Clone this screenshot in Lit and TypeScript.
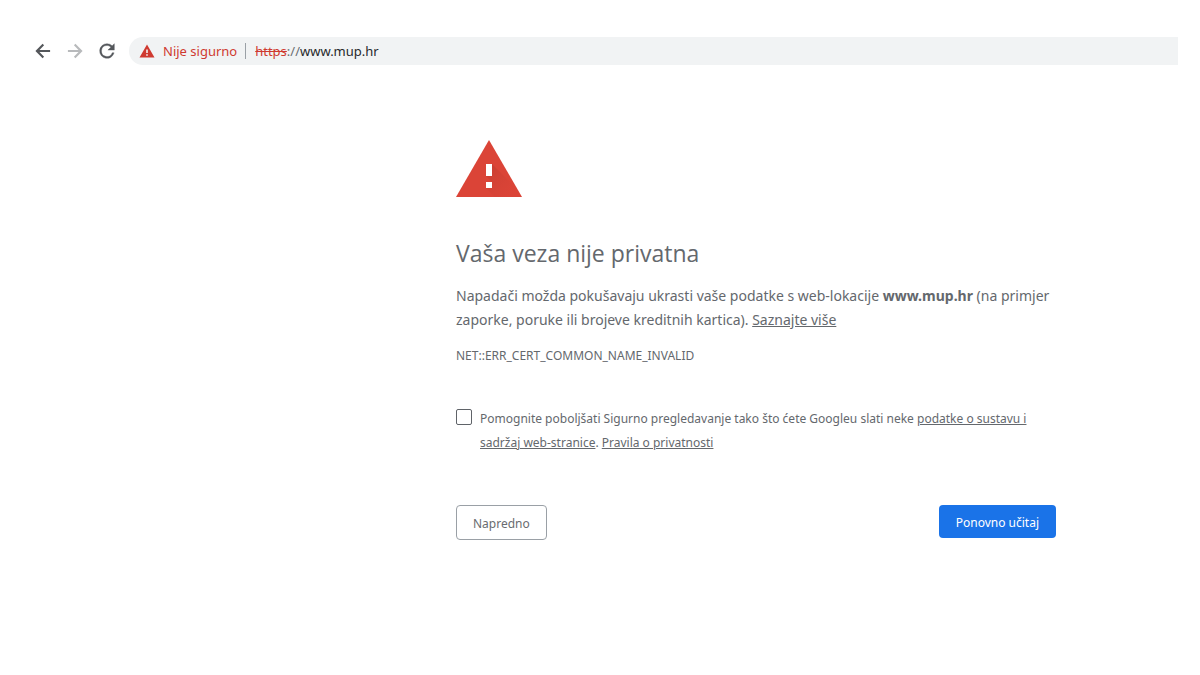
import { LitElement, html, css } from "lit";
import { customElement, state } from "lit/decorators.js";

@customElement("browser-toolbar")
class BrowserToolbar extends LitElement {
  static styles = css`
    :host {
      display: flex;
      align-items: center;
      padding: 37px 22px 0 31px;
      font-family: "Noto Sans", "Open Sans", sans-serif;
      font-size: 13px;
      line-height: 20px;
    }
    button {
      border: 0;
      background: none;
      font: inherit;
      color: inherit;
      padding: 0;
    }
    .nav {
      display: flex;
      gap: 8px;
      margin-right: 10px;
      color: #54575b;
    }
    .nav button {
      display: grid;
      place-items: center;
      width: 24px;
      height: 28px;
    }
    .nav button:disabled {
      color: #b8babc;
    }
    svg {
      display: block;
      fill: currentColor;
    }
    .omnibox {
      display: flex;
      align-items: center;
      flex: 1;
      min-width: 0;
      height: 28px;
      padding-left: 10px;
      border-radius: 14px 0 0 14px;
      background: #f1f3f4;
    }
    .security {
      display: flex;
      align-items: center;
      gap: 8px;
      color: #cf3a30;
      white-space: nowrap;
    }
    .divider {
      width: 1px;
      height: 16px;
      margin: 0 9px 0 8px;
      background: #9aa0a6;
    }
    .scheme {
      color: #cf3a30;
      text-decoration: line-through;
    }
    .slashes {
      color: #6b6f73;
    }
    input {
      flex: 1;
      min-width: 0;
      border: 0;
      padding: 0;
      outline: 0;
      background: none;
      font: inherit;
      color: #27292c;
    }
  `;

  render() {
    return html`
      <nav class="nav" aria-label="Navigacija">
        <button aria-label="Natrag">
          <svg width="20" height="20" viewBox="0 0 24 24">
            <path d="M20.5 10.7H7.800l5.500-5.500L11.500 3.400 2.900 12l8.600 8.600 1.800-1.800-5.500-5.500h12.700z" />
          </svg>
        </button>
        <button aria-label="Naprijed" disabled>
          <svg width="20" height="20" viewBox="0 0 24 24">
            <path d="M3.500 10.700h12.700l-5.500-5.500 1.800-1.800 8.600 8.600-8.600 8.600-1.800-1.800 5.500-5.500H3.500z" />
          </svg>
        </button>
        <button aria-label="Osvježi">
          <svg width="22" height="22" viewBox="0 0 24 24">
            <path
              stroke="currentColor"
              stroke-width=".4"
              d="M17.650 6.350A7.950 7.950 0 0 0 12 4a8 8 0 1 0 7.730 10h-2.080A6 6 0 1 1 12 6c1.660 0 3.140.690 4.220 1.780L13 11h7V4z"
            />
          </svg>
        </button>
      </nav>
      <div class="omnibox">
        <button class="security">
          <svg width="16" height="14" viewBox="0 0 16 14">
            <path
              fill-rule="evenodd"
              d="M8 .5 15.500 13.500H.5zM7.200 5.500v3.500h1.600V5.500zm0 4.700v1.600h1.600v-1.600z"
            />
          </svg>
          Nije sigurno
        </button>
        <span class="divider"></span>
        <span class="scheme">https</span><span class="slashes">://</span>
        <input aria-label="Adresa" value="www.mup.hr" spellcheck="false" />
      </div>
    `;
  }
}

@customElement("privacy-warning")
class PrivacyWarning extends LitElement {
  static styles = css`
    :host {
      display: block;
      box-sizing: border-box;
      max-width: 600px;
      margin: 75px 24px 0 38%;
      color: #64686d;
      font-family: "Noto Sans", "Open Sans", sans-serif;
      font-size: 14px;
      line-height: 24px;
    }
    .icon {
      display: block;
    }
    h1 {
      margin: 40px 0 15px;
      font-family: "Open Sans", "Noto Sans", sans-serif;
      font-size: 23px;
      font-weight: 400;
      line-height: 32px;
    }
    p {
      margin: 0;
    }
    a {
      color: inherit;
      text-decoration: underline;
    }
    .code {
      margin-top: 12px;
      font-size: 12px;
    }
    .opt-in {
      display: flex;
      gap: 8px;
      margin-top: 39px;
      font-size: 12px;
    }
    input {
      appearance: none;
      flex: none;
      width: 16px;
      height: 16px;
      margin: 2px 0 0;
      border: 1px solid #5f6368;
      border-radius: 2px;
      background: #fff;
    }
    input:checked {
      background: #1a73e8;
    }
    .actions {
      display: flex;
      justify-content: space-between;
      align-items: flex-start;
      margin-top: 50px;
    }
    button {
      padding: 9px 17px 7px;
      border: 0;
      border-radius: 4px;
      font: inherit;
      font-size: 12px;
      line-height: 17px;
    }
    .secondary {
      padding: 9px 16px 7px;
      border: 1px solid #9aa0a6;
      background: #fff;
      color: #696c70;
    }
    .primary {
      background: #1a73e8;
      color: #fff;
    }
  `;

  @state() private report = false;

  render() {
    return html`
      <svg class="icon" width="66" height="57" viewBox="0 0 66 57" aria-hidden="true">
        <defs>
          <linearGradient id="shade" x1="0" y1="0" x2="1" y2="1">
            <stop offset="0" stop-color="#b8382c" stop-opacity=".6" />
            <stop offset="1" stop-color="#db4437" stop-opacity="0" />
          </linearGradient>
        </defs>
        <path fill="#db4437" d="M33 0 66 57H0z" />
        <path fill="url(#shade)" d="M36 24 56 44 62 57H39l-9-9 6-6-6-6z" />
        <path fill="#fff" d="M30 24h6v12h-6zM30 42h6v6h-6z" />
      </svg>
      <h1>Vaša veza nije privatna</h1>
      <p>
        Napadači možda pokušavaju ukrasti vaše podatke s web-lokacije
        <strong>www.mup.hr</strong> (na primjer zaporke, poruke ili brojeve kreditnih kartica).
        <a href="#saznajte">Saznajte više</a>
      </p>
      <p class="code">NET::ERR_CERT_COMMON_NAME_INVALID</p>
      <div class="opt-in">
        <input
          id="report"
          type="checkbox"
          .checked=${this.report}
          @change=${(e: Event) => (this.report = (e.target as HTMLInputElement).checked)}
        />
        <label for="report">
          Pomognite poboljšati Sigurno pregledavanje tako što ćete Googleu slati neke
          <a href="#podaci">podatke o sustavu i sadržaj web-stranice</a>.
          <a href="#pravila">Pravila o privatnosti</a>
        </label>
      </div>
      <div class="actions">
        <button class="secondary">Napredno</button>
        <button class="primary">Ponovno učitaj</button>
      </div>
    `;
  }
}

@customElement("app-root")
class AppRoot extends LitElement {
  static styles = css`
    :host {
      display: block;
      min-height: 100vh;
      background: #fff;
    }
  `;

  render() {
    return html`
      <browser-toolbar></browser-toolbar>
      <privacy-warning></privacy-warning>
    `;
  }
}
